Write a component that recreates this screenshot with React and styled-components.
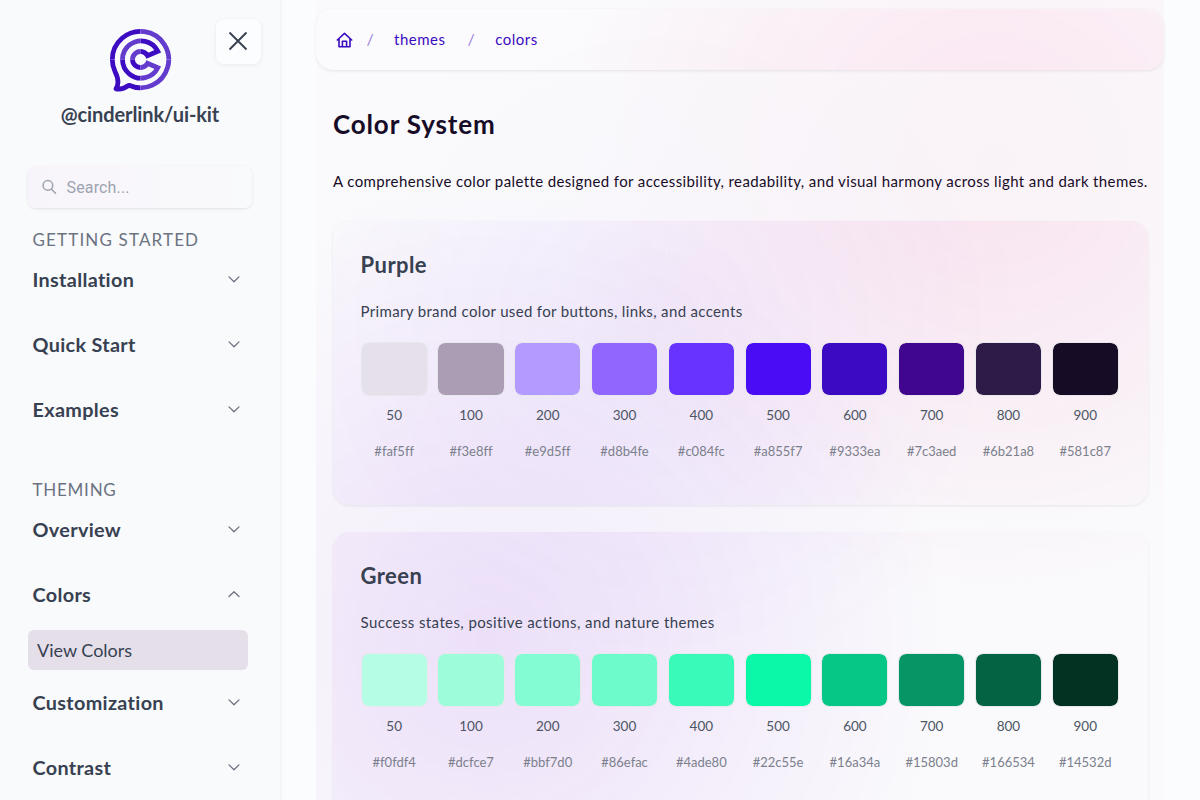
import React from "react";
import styled, { createGlobalStyle } from "styled-components";

// Three soft lights shared by the page and its panels; (x, y) is the panel's offset in the main column.
const glow = (x, y, purple, pink, violet) => `
  radial-gradient(circle at ${170 - x}px ${640 - y}px,rgba(150,50,230,${purple}) 0,transparent 466px),
  radial-gradient(circle at ${678 - x}px ${160 - y}px,rgba(240,50,140,${pink}) 0,transparent 450px),
  radial-gradient(circle at ${339 - x}px ${320 - y}px,rgba(140,80,250,${violet}) 0,transparent 370px)`;

const Global = createGlobalStyle`
  *{box-sizing:border-box}
  body{margin:0;background:#fbfcfe;font-family:Lato,"Liberation Sans",sans-serif;font-variant-ligatures:none;overflow:hidden}
  h1,h2,p{margin:0}
`;
const Page = styled.div`display:flex;height:800px;overflow:hidden;`;
const Sidebar = styled.aside`width:281px;flex:none;background:#f9fafc;border-right:1px solid #f3f4f6;box-shadow:1px 0 3px rgba(0,0,0,.025);position:relative;padding:28px 28px 0;overflow:hidden;`;
const Close = styled.button`position:absolute;left:216px;top:19px;width:45px;height:45px;border:0;border-radius:8px;background:#fcfdfe;box-shadow:0 1px 4px rgba(0,0,0,.07);padding:0 1px 1px 0;display:grid;place-items:center;`;
const Logo = styled.svg`display:block;margin:0 auto;transform:translateX(1.5px);`;
const Brand = styled.div`text-align:center;font-weight:700;font-size:20px;line-height:28px;color:#374151;margin:8px -20px 0;white-space:nowrap;letter-spacing:-.1px;`;
const Search = styled.div`height:42px;width:224px;margin:38px 0 0;border-radius:8px;background:linear-gradient(90deg,#f8f4fb,#f9fafb);box-shadow:0 1px 3px rgba(0,0,0,.1);display:flex;align-items:center;gap:9.5px;padding-left:13px;color:#9ca3af;font:16px Roboto,sans-serif;letter-spacing:.15px;`;
const Heading = styled.div`font-size:17px;line-height:24px;color:#6b7280;letter-spacing:${p => p.$ls || 1.15}px;margin:${p => p.$top}px 0 12.5px 4.5px;text-transform:uppercase;white-space:nowrap;`;
const Item = styled.div`display:flex;align-items:center;justify-content:space-between;height:28px;padding:0 11.5px 0 4.5px;margin-bottom:${p => p.$gap ?? 37.3}px;font-weight:700;font-size:19.8px;color:#374151;letter-spacing:.34px;`;
const Active = styled.div`height:40px;width:220px;border-radius:6px;background:#e5dfea;color:#374151;font-size:18px;line-height:40px;padding-left:9px;margin-bottom:17.3px;`;
const Main = styled.main`width:848px;margin-left:35px;flex:none;padding-top:9px;background:${glow(0, 0, .06, .04, .015)},#fafafc;`;
const Crumbs = styled.nav`height:61px;border-radius:17px;background:${glow(0, 9, .03, .09, .01)},rgba(255,255,255,.3);box-shadow:0 1px 3px rgba(0,0,0,.09);display:flex;align-items:center;padding:0 0 2px 20px;color:#3b0bc0;font-size:15px;letter-spacing:.5px;`;
const HomeIcon = styled.svg`margin-top:3px;`;
const Slash = styled.span`color:#9b83dc;width:${p => p.$w}px;padding-left:${p => p.$pl}px;font-size:16px;`;
const Content = styled.div`padding:0 16.5px 0 17px;`;
const Title = styled.h1`font-size:26px;line-height:36px;color:#170c27;margin-top:36px;letter-spacing:.85px;`;
const Lead = styled.p`font-size:15px;line-height:24px;color:#170c27;margin:27px 0 28px;white-space:nowrap;letter-spacing:.382px;`;
const Card = styled.section`height:284px;border-radius:17px;background:${p => glow(17, p.$y, .075, .075, .05)};box-shadow:0 1px 3px rgba(0,0,0,.08);padding:28px 27.6px 0;margin-bottom:27px;`;
const CardTitle = styled.h2`font-size:22px;line-height:32px;color:#374151;letter-spacing:.4px;`;
const CardText = styled.p`font-size:15px;line-height:24px;color:#374151;margin:18px 0 19px;white-space:nowrap;letter-spacing:${p => p.$ls}px;`;
const Grid = styled.div`display:grid;grid-template-columns:repeat(10,67.2px);column-gap:9.6px;`;
const Cell = styled.div`display:flex;flex-direction:column;text-align:center;white-space:nowrap;`;
const Chip = styled.div`height:54px;border:1px solid rgba(229,231,235,.9);border-radius:8px;background:${p => p.$c};background-clip:padding-box;`;
const Step = styled.div`font-size:13.5px;line-height:20px;margin-top:8.5px;color:#4b5563;`;
const Hex = styled.div`font-size:13px;line-height:20px;margin-top:16px;color:#7b808c;`;

const LETTER = "M17.3 -8.2 L7 -3.9 A8 8 0 1 0 7 3.9 L17.3 8.2 A18.6 18.6 0 1 1 17.3 -8.2Z";
const BUBBLE = "M-28.2 0A28.2 28.2 0 1 1 -11.5 25.8C-16 29-21 30-24.5 29.3C-21 24-22.5 18-25.5 12A28.2 28.2 0 0 1 -28.2 0Z";
const quarters = [
  { id: "nw", clip: "M-32-32H0V0H-32z", bubble: "#3d0bc2", letter: "#633bcd" },
  { id: "ne", clip: "M0-32H34V0H0z", bubble: "#633bcd", letter: "#3d0bc2" },
  { id: "sw", clip: "M-32 0H0V34H-32z", bubble: "#3d0bc2", letter: "#3d0bc2" },
  { id: "se", clip: "M0 0H34V34H0z", bubble: "#633bcd", letter: "#633bcd" },
];
const LogoMark = () => (
  <Logo width="64" height="64" viewBox="-31 -31.5 64 64" fill="none" strokeWidth="4.8" strokeLinejoin="round">
    {quarters.map(q => (
      <React.Fragment key={q.id}>
        <clipPath id={q.id}><path d={q.clip} /></clipPath>
        <g clipPath={`url(#${q.id})`}>
          <path d={BUBBLE} stroke={q.bubble} />
          <path d={LETTER} stroke={q.letter} strokeLinejoin="miter" />
        </g>
      </React.Fragment>
    ))}
  </Logo>
);
const Chevron = ({ up }) => (
  <svg width="14" height="14" viewBox="0 0 14 14" fill="none" stroke="#6b7280" strokeWidth="1.3" strokeLinecap="round" strokeLinejoin="round">
    <path d={up ? "M2 9.5L7 4.7L12 9.5" : "M2 4.9L7 9.7L12 4.9"} />
  </svg>
);
const palettes = [
  { name: "Purple", y: 221, ls: .34, text: "Primary brand color used for buttons, links, and accents",
    c: ["#e5e0ea", "#aa9db4", "#b39aff", "#9166ff", "#6933ff", "#490cf4", "#3b0ac2", "#41068e", "#2e1b48", "#160c25"],
    h: ["#faf5ff", "#f3e8ff", "#e9d5ff", "#d8b4fe", "#c084fc", "#a855f7", "#9333ea", "#7c3aed", "#6b21a8", "#581c87"] },
  { name: "Green", y: 532, ls: .4, text: "Success states, positive actions, and nature themes",
    c: ["#b5fde4", "#9dfddb", "#84fcd3", "#6cfbca", "#3afab9", "#09f9a8", "#07c786", "#069565", "#046343", "#023222"],
    h: ["#f0fdf4", "#dcfce7", "#bbf7d0", "#86efac", "#4ade80", "#22c55e", "#16a34a", "#15803d", "#166534", "#14532d"] },
];
const steps = [50, 100, 200, 300, 400, 500, 600, 700, 800, 900];

export default function App() {
  return (
    <Page>
      <Global />
      <Sidebar>
        <LogoMark />
        <Close><svg width="20" height="20" stroke="#374151" strokeWidth="1.9"><path d="M1.5 1.5L18.5 18.5M18.5 1.5L1.5 18.5" /></svg></Close>
        <Brand>@cinderlink/ui-kit</Brand>
        <Search>
          <svg width="16" height="16" fill="none" stroke="#9ca3af" strokeWidth="1.5" strokeLinecap="round"><circle cx="6.9" cy="6.4" r="4.8" /><path d="M10.5 10.2L14.5 14.3" /></svg>
          <span>Search...</span>
        </Search>
        <Heading $top={20}>Getting Started</Heading>
        <Item>Installation<Chevron /></Item>
        <Item>Quick Start<Chevron /></Item>
        <Item $gap={55}>Examples<Chevron /></Item>
        <Heading $top={0} $ls={.75}>Theming</Heading>
        <Item>Overview<Chevron /></Item>
        <Item $gap={22.6}>Colors<Chevron up /></Item>
        <Active>View Colors</Active>
        <Item>Customization<Chevron /></Item>
        <Item>Contrast<Chevron /></Item>
      </Sidebar>
      <Main>
        <Crumbs>
          <HomeIcon width="17" height="17" viewBox="0 0 17 17" fill="none" stroke="#3b0bc0" strokeWidth="1.6" strokeLinejoin="round" strokeLinecap="round"><path d="M1.3 8L8.5 1.3L15.7 8M3 7V14.8H14V7M6.4 14.6V9.3H10.6V14.6" /></HomeIcon>
          <Slash $w={41} $pl={13.5}>/</Slash><span>themes</span><Slash $w={49.8} $pl={22}>/</Slash><span>colors</span>
        </Crumbs>
        <Content>
          <Title>Color System</Title>
          <Lead>A comprehensive color palette designed for accessibility, readability, and visual harmony across light and dark themes.</Lead>
          {palettes.map(p => (
            <Card key={p.name} $y={p.y}>
              <CardTitle>{p.name}</CardTitle>
              <CardText $ls={p.ls}>{p.text}</CardText>
              <Grid>{steps.map((s, i) => <Cell key={s}><Chip $c={p.c[i]} /><Step>{s}</Step><Hex>{p.h[i]}</Hex></Cell>)}</Grid>
            </Card>
          ))}
        </Content>
      </Main>
    </Page>
  );
}
